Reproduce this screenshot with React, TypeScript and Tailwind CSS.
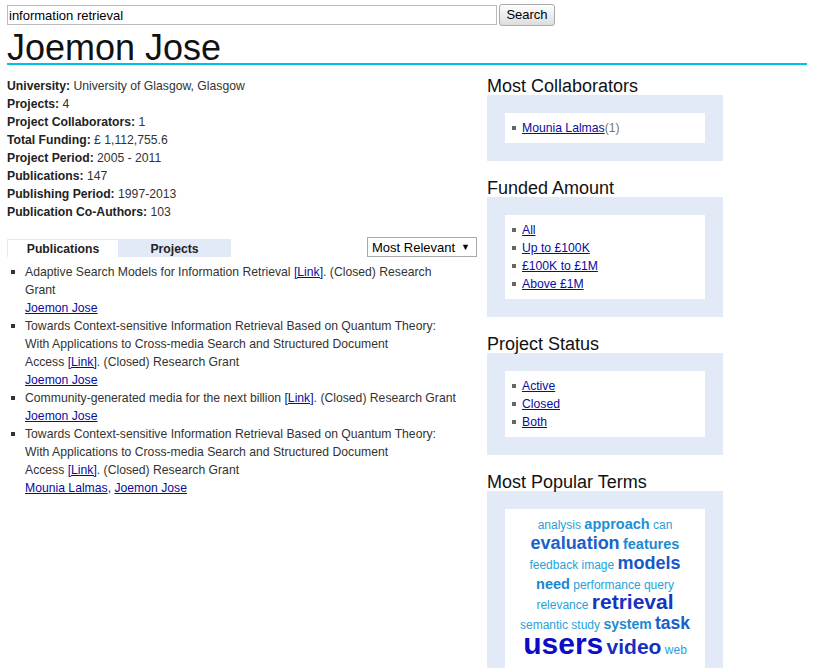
import React from "react";

type Word = { t: string; cls: string };

const LIGHT = "text-[12px] font-normal text-[#26a2da]";

const cloud: Word[][] = [
  [
    { t: "analysis", cls: LIGHT },
    { t: "approach", cls: "text-[14.5px] font-bold text-[#1a90d4]" },
    { t: "can", cls: LIGHT },
  ],
  [
    { t: "evaluation", cls: "text-[18px] font-bold text-[#1762cb]" },
    { t: "features", cls: "text-[14.5px] font-bold text-[#1a8ad2]" },
  ],
  [
    { t: "feedback", cls: LIGHT },
    { t: "image", cls: LIGHT },
    { t: "models", cls: "text-[18px] font-bold text-[#1558c9]" },
  ],
  [
    { t: "need", cls: "text-[14.5px] font-bold text-[#1a86d2]" },
    { t: "performance", cls: LIGHT },
    { t: "query", cls: LIGHT },
  ],
  [
    { t: "relevance", cls: LIGHT },
    { t: "retrieval", cls: "text-[21px] font-bold text-[#1634c2]" },
  ],
  [
    { t: "semantic", cls: LIGHT },
    { t: "study", cls: LIGHT },
    { t: "system", cls: "text-[14px] font-bold text-[#1a8ad2]" },
    { t: "task", cls: "text-[17.5px] font-bold text-[#1660c8]" },
  ],
  [
    { t: "users", cls: "text-[30px] font-bold text-[#0c0cc8]" },
    { t: "video", cls: "text-[21px] font-bold text-[#1830bd]" },
    { t: "web", cls: LIGHT },
  ],
];

const info: [string, string][] = [
  ["University:", "University of Glasgow, Glasgow"],
  ["Projects:", "4"],
  ["Project Collaborators:", "1"],
  ["Total Funding:", "£ 1,112,755.6"],
  ["Project Period:", "2005 - 2011"],
  ["Publications:", "147"],
  ["Publishing Period:", "1997-2013"],
  ["Publication Co-Authors:", "103"],
];

const pubs = [
  { title: "Adaptive Search Models for Information Retrieval", authors: ["Joemon Jose"] },
  {
    title:
      "Towards Context-sensitive Information Retrieval Based on Quantum Theory: With Applications to Cross-media Search and Structured Document Access",
    authors: ["Joemon Jose"],
  },
  { title: "Community-generated media for the next billion", authors: ["Joemon Jose"] },
  {
    title:
      "Towards Context-sensitive Information Retrieval Based on Quantum Theory: With Applications to Cross-media Search and Structured Document Access",
    authors: ["Mounia Lalmas", "Joemon Jose"],
  },
];

const A = ({ children }: { children: React.ReactNode }) => (
  <a href="#" className="text-[#0b0b9e] underline">
    {children}
  </a>
);

const Facet = ({ title, children }: { title: string; children: React.ReactNode }) => (
  <div className="mb-[16px]">
    <h2 className="pt-[2px] text-[18px] leading-[18px] text-[#111]">{title}</h2>
    <div className="bg-[#e3eaf7] p-[18px]">
      <div className="bg-white py-[6px]">{children}</div>
    </div>
  </div>
);

const FacetItem = ({ children }: { children: React.ReactNode }) => (
  <li className="flex leading-[18px]">
    <span className="w-[17px] shrink-0 pl-[7px] pt-[7px]">
      <span className="block h-[4px] w-[4px] bg-[#666]" />
    </span>
    <span>{children}</span>
  </li>
);

export default function App() {
  return (
    <div className="min-h-[668px] bg-white px-[7px] text-[12.2px] text-[#333] font-['Liberation_Sans',Arial,sans-serif]">
      <div className="flex items-center gap-[2px] pt-[4px]">
        <input
          defaultValue="information retrieval"
          className="h-[20px] w-[490px] border border-[#bbb] px-[1px] text-[13px] text-black outline-none"
        />
        <button className="h-[22px] w-[56px] rounded-[3px] border border-[#aaa] bg-gradient-to-b from-[#fdfdfd] to-[#dedede] text-[13px] text-black">
          Search
        </button>
      </div>

      <h1 className="mt-[6px] w-[800px] border-b-2 border-[#00bfef] text-[36px] leading-[31px] text-[#111]">
        Joemon Jose
      </h1>

      <div className="mt-[10px] flex gap-[10px]">
        <div className="w-[470px] pt-[2px]">
          {info.map(([k, v]) => (
            <div key={k} className="leading-[18px]">
              <b className="text-[#222]">{k}</b> {v}
            </div>
          ))}

          <div className="mt-[16px] flex items-end justify-between">
            <div className="flex font-bold text-[#222]">
              <div className="h-[18px] w-[111px] border-l border-t border-[#e3eaf7] bg-white pt-[1px] text-center leading-[17px]">
                Publications
              </div>
              <div className="h-[18px] w-[113px] bg-[#e3eaf7] pt-[2px] text-center leading-[16px]">Projects</div>
            </div>
            <div className="flex h-[20px] w-[110px] items-center justify-between border border-[#aaa] pl-[4px] pr-[6px] pt-[1px] text-[13px] text-black">
              <span>Most Relevant</span>
              <span className="text-[9px]">▼</span>
            </div>
          </div>

          <ul className="mt-[6px] w-[454px]">
            {pubs.map((p, i) => (
              <li key={i} className="flex leading-[18px]">
                <span className="w-[18px] shrink-0 pl-[4px] pt-[7px]">
                  <span className="block h-[4px] w-[4px] bg-[#333]" />
                </span>
                <div>
                  <div>
                    {p.title}
                    {"\u00a0"}
                    <A>[Link]</A>. (Closed) Research Grant
                  </div>
                  <div>
                    {p.authors.map((a, j) => (
                      <React.Fragment key={a}>
                        {j > 0 && ", "}
                        <A>{a}</A>
                      </React.Fragment>
                    ))}
                  </div>
                </div>
              </li>
            ))}
          </ul>
        </div>

        <div className="w-[236px]">
          <Facet title="Most Collaborators">
            <ul>
              <FacetItem>
                <A>Mounia Lalmas</A>
                <span className="text-[#777]">(1)</span>
              </FacetItem>
            </ul>
          </Facet>
          <Facet title="Funded Amount">
            <ul>
              {["All", "Up to £100K", "£100K to £1M", "Above £1M"].map((x) => (
                <FacetItem key={x}>
                  <A>{x}</A>
                </FacetItem>
              ))}
            </ul>
          </Facet>
          <Facet title="Project Status">
            <ul>
              {["Active", "Closed", "Both"].map((x) => (
                <FacetItem key={x}>
                  <A>{x}</A>
                </FacetItem>
              ))}
            </ul>
          </Facet>
          <Facet title="Most Popular Terms">
            <div className="pb-[6px] text-center text-[12px]">
              {cloud.map((row, i) => (
                <div
                  key={i}
                  className={i === cloud.length - 1 ? "h-[26px] leading-[30px]" : "h-[20px] leading-[20px]"}
                >
                  {row.map((w, j) => (
                    <React.Fragment key={w.t}>
                      {j > 0 && " "}
                      <span className={w.cls + " leading-[0px]"}>{w.t}</span>
                    </React.Fragment>
                  ))}
                </div>
              ))}
            </div>
          </Facet>
        </div>
      </div>
    </div>
  );
}
